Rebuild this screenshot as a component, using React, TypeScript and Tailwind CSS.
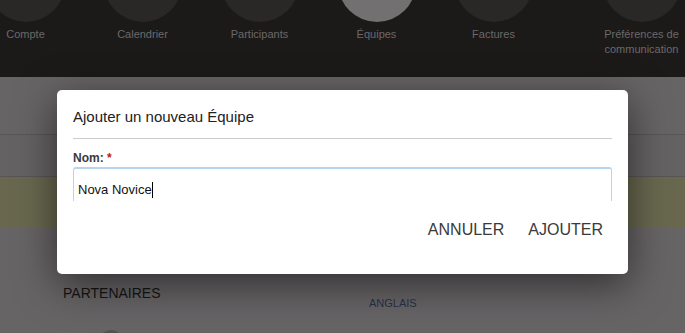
const navItems = [
  { label: "Compte", active: false },
  { label: "Calendrier", active: false },
  { label: "Participants", active: false },
  { label: "Équipes", active: true },
  { label: "Factures", active: false },
];

const NavItem = ({ label, active }: { label: string; active: boolean }) => (
  <div className="w-[117px] shrink-0 flex flex-col items-center">
    <div className={`w-[78px] h-[78px] rounded-full -mt-[56px] ${active ? "bg-[#737071]" : "bg-[#2a2727]"}`} />
    <span className="mt-[5px] text-[11px] leading-[15px] text-[#6a6969] text-center">{label}</span>
  </div>
);

const App = () => {
  return (
    <div className="relative w-[685px] h-[333px] overflow-hidden bg-[#676466] font-['Liberation_Sans',Arial,sans-serif]">
      {/* top nav */}
      <div className="h-[77px] bg-[#1c1919] flex -ml-[33px] overflow-hidden">
        {navItems.map((item) => (
          <NavItem key={item.label} {...item} />
        ))}
        <div className="w-[117px] shrink-0 ml-[31px] flex flex-col items-center">
          <div className="w-[78px] h-[78px] rounded-full -mt-[56px] bg-[#2a2727]" />
          <span className="mt-[5px] text-[11px] leading-[15px] text-[#6a6969] text-center">
            Préférences de
            <br />
            communication
          </span>
        </div>
      </div>

      {/* page behind the dialog */}
      <div className="h-[58px] bg-[#676466] border-b border-[#575556]" />
      <div className="h-[42px] bg-[#656264] border-b border-[#575556]" />
      <div className="h-[50px] bg-[#69684f]" />
      <div className="flex pt-[58px]">
        <div className="w-[369px] pl-[63px] text-[14px] leading-[16px] text-[#151515]">PARTENAIRES</div>
        <div className="pt-[12px] text-[11px] leading-[13px] text-[#27304a]">ANGLAIS</div>
      </div>
      <div className="absolute left-[98px] top-[330px] w-[26px] h-[26px] rounded-full bg-[#555254]" />

      {/* dialog */}
      <div className="absolute left-[57px] top-[90px] w-[571px] h-[184px] bg-white rounded-[5px] shadow-[0_10px_40px_rgba(0,0,0,0.55)] px-4 pt-[17px]">
        <h2 className="text-[15px] leading-[20px] text-[#222]">Ajouter un nouveau Équipe</h2>
        <div className="mt-[11px] h-px bg-[#cccccc]" />
        <label className="block mt-[11px] text-[12px] leading-[16px] font-bold text-[#3a3a3a]">
          Nom: <span className="text-[#c01818]">*</span>
        </label>
        <div className="mt-px h-[34px] border-t-2 border-t-[#b9d5ec] border-x border-x-[#cfcfcf] rounded-t-[3px] pl-[4px] pt-[10px] text-[13px] leading-[16px] text-[#111] flex items-center">
          <span>Nova Novice</span>
          <span className="w-px h-[16px] bg-black" />
        </div>
        <div className="flex justify-end gap-[24px] pr-[9px] mt-[19px] text-[16px] leading-[20px] text-[#3a3a3a]">
          <span>ANNULER</span>
          <span>AJOUTER</span>
        </div>
      </div>
    </div>
  );
};

export default App;
